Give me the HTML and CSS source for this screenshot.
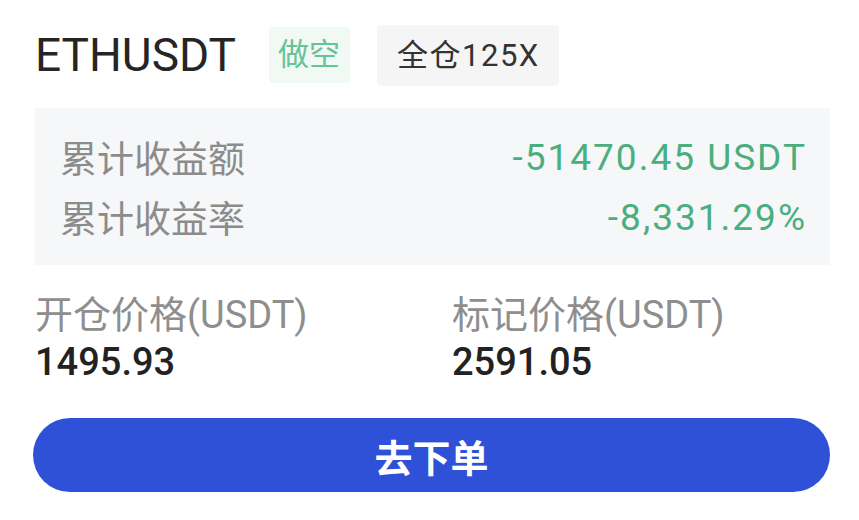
FILE: index.html
```html
<!DOCTYPE html>
<html lang="zh-CN">
<head>
  <meta charset="UTF-8">
  <title>ETHUSDT 持仓</title>
  <meta name="viewport" content="width=device-width, initial-scale=1">
  <link rel="stylesheet" href="styles.css">
</head>
<body>
  <div class="card">
    <div class="head">
      <span class="symbol">ETHUSDT</span>
      <span class="tag tag-short">做空</span>
      <span class="tag tag-lev">全仓125X</span>
    </div>

    <div class="pnl">
      <div class="pnl-row">
        <span class="pnl-label">累计收益额</span>
        <span class="pnl-value">-51470.45 USDT</span>
      </div>
      <div class="pnl-row">
        <span class="pnl-label">累计收益率</span>
        <span class="pnl-value">-8,331.29%</span>
      </div>
    </div>

    <div class="prices">
      <div class="price">
        <div class="price-label">开仓价格(USDT)</div>
        <div class="price-value">1495.93</div>
      </div>
      <div class="price">
        <div class="price-label">标记价格(USDT)</div>
        <div class="price-value">2591.05</div>
      </div>
    </div>

    <button class="order-btn">去下单</button>
  </div>
</body>
</html>
```

FILE: styles.css
```css
body {
  margin: 0;
  background: #fff;
  font-family: Roboto, "Noto Sans CJK SC", sans-serif;
  color: #222;
}

.card {
  padding: 25px 29px 0 35px;
}

.head {
  display: flex;
  align-items: center;
  height: 60px;
}

.symbol {
  font-size: 46px;
  color: #252525;
  margin-right: 33px;
}

.tag {
  font-size: 31px;
  line-height: 1;
  border-radius: 4px;
}

.tag-short {
  background: #f0f9f4;
  color: #68c298;
  padding: 12px 10px 13px 9px;
  margin-right: 27px;
}

.tag-lev {
  background: #f5f5f5;
  color: #333;
  padding: 15px 19px 15px 20px;
  letter-spacing: 1.5px;
}

.pnl {
  margin-top: 23px;
  background: #f6f7f8;
  padding: 19px 25px 18px 25px;
}

.pnl-row {
  display: flex;
  justify-content: space-between;
  align-items: center;
  height: 60px;
}

.pnl-label {
  font-size: 37px;
  color: #8c8c8c;
}

.pnl-value {
  font-size: 37px;
  color: #4bae7e;
  letter-spacing: 2px;
  margin-right: -2px;
}

.prices {
  display: flex;
  margin-top: 27px;
}

.price {
  flex: 0 0 417px;
}

.price-label {
  font-size: 38px;
  color: #8e8e8e;
  line-height: 46px;
}

.price-value {
  font-size: 38px;
  font-weight: 500;
  color: #222;
  line-height: 48px;
}

.order-btn {
  display: block;
  width: 797px;
  height: 74px;
  margin: 32px 0 0 -2px;
  border: none;
  border-radius: 37px;
  background: #2f51d7;
  color: #fff;
  font-family: inherit;
  font-size: 38px;
  font-weight: bold;
}
```
